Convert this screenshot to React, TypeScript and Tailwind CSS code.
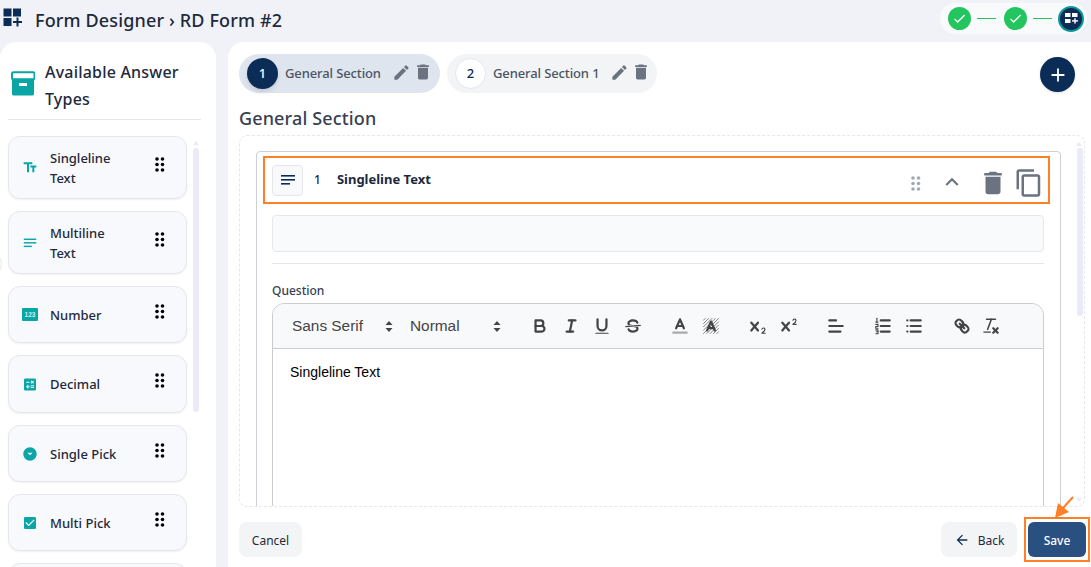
import React from 'react';
import {
  MdArrowDropDownCircle,
  MdCalculate,
  MdCheckBox,
  MdCheck,
  MdDelete,
  MdEdit,
  MdKeyboardArrowUp,
  MdOutlineContentCopy,
  MdTextFields,
  MdAdd,
  MdArrowBack,
} from 'react-icons/md';

const Dots = ({ color = '#000', className = '' }: any) => (
  <svg width="10" height="15" viewBox="0 0 10 15" className={className} fill={color}>
    {[2, 7.5, 13].map((cy) =>
      [2, 7.5].map((cx) => <circle key={`${cx}-${cy}`} cx={cx} cy={cy} r="1.8" />)
    )}
  </svg>
);

const ShortText = ({ size = 18, color = '#0aa5a5', className = '' }: any) => (
  <svg width={size} height={size} viewBox="0 0 18 18" className={className} fill={color}>
    <rect x="2" y="4" width="14" height="1.6" />
    <rect x="2" y="8" width="14" height="1.6" />
    <rect x="2" y="12" width="9" height="1.6" />
  </svg>
);

const NumberIcon = () => (
  <svg width="16" height="13" viewBox="0 0 16 13">
    <rect width="16" height="13" fill="#0aa5a5" rx="1" />
    <text x="8" y="9" textAnchor="middle" fill="#cfeeee" fontSize="6.5" fontWeight="700" fontFamily="Liberation Sans">123</text>
  </svg>
);

const ArchiveIcon = ({ className = '' }: any) => (
  <svg width="24" height="25" viewBox="0 0 24 25" className={className}>
    <rect x="1" y="7" width="22" height="17.5" rx="1.5" fill="#0aa5a5" />
    <rect x="1" y="1.2" width="22.5" height="7" rx="1.5" fill="#fff" stroke="#0aa5a5" strokeWidth="2" />
    <rect x="8" y="12" width="8" height="3" fill="#fff" />
  </svg>
);

const answerTypes = [
  { label: <>Singleline<br />Text</>, icon: <MdTextFields size={19} color="#0aa5a5" />, h: 'h-[63px]' },
  { label: <>Multiline<br />Text</>, icon: <ShortText size={16} />, h: 'h-[63px]' },
  { label: 'Number', icon: <NumberIcon />, h: 'h-[57px]' },
  { label: 'Decimal', icon: <MdCalculate size={17} color="#0aa5a5" />, h: 'h-[58px]' },
  { label: 'Single Pick', icon: <MdArrowDropDownCircle size={18} color="#0aa5a5" />, h: 'h-[57px]' },
  { label: 'Multi Pick', icon: <MdCheckBox size={18} color="#0aa5a5" />, h: 'h-[57px]' },
  { label: '', icon: null, h: 'h-[57px]' },
];

const AnswerCard = ({ label, icon, h }: any) => (
  <div className={`${h} shrink-0 rounded-xl border border-[#e5e7eb] bg-[#f8f9fc] shadow-[0_1px_2px_rgba(0,0,0,0.06)] flex items-center pl-[13px] pr-[21px]`}>
    <div className="w-[16px] flex justify-center shrink-0">{icon}</div>
    <div className="ml-[12px] flex-1 text-[13px] leading-[20px] font-medium text-[#1e293b]">{label}</div>
    {label ? <Dots className="-mt-[7px]" /> : null}
  </div>
);

const SectionTab = ({ num, title, active, className }: any) => (
  <div className={`${className} h-[39px] rounded-[20px] flex items-center pl-2 ${active ? 'bg-[#dfe5ef]' : 'bg-[#f3f4f6]'}`}>
    <div
      className={
        active
          ? 'w-[31px] h-[31px] rounded-full bg-[#0b2c56] text-white flex items-center justify-center text-[13px] font-medium shadow-md'
          : 'w-[31px] h-[31px] rounded-full bg-white border border-[#e2e8f0] text-[#0b2c56] flex items-center justify-center text-[13px] font-medium'
      }
    >
      {num}
    </div>
    <span className="ml-[7px] mt-[1px] text-[13px] tracking-[-0.12px] font-medium text-[#4b5563]">{title}</span>
    <MdEdit size={19} color="#6b7280" className="ml-[11px] -mt-[3px]" />
    <MdDelete size={20} color="#6b7280" className="ml-[2px] -mt-[3px]" />
  </div>
);

const QlBtn = ({ children, className = '' }: any) => (
  <span className={`${className} w-[31px] h-[20px] flex justify-center shrink-0`}>
    <svg width="20" height="20" viewBox="0 0 18 18" fill="none" stroke="#444" strokeWidth="2" strokeLinecap="round" strokeLinejoin="round">
      {children}
    </svg>
  </span>
);

const SelectCaret = () => (
  <svg width="8" height="13" viewBox="0 0 8 13" fill="#444">
    <path d="M4 1 L7.5 5 H0.5 Z" />
    <path d="M4 12 L7.5 8 H0.5 Z" />
  </svg>
);

const xPath =
  'M9.65,5.241a1,1,0,0,0-1.409.108L6,7.964,3.759,5.349A1,1,0,0,0,2.192,6.59178Q2.21,6.615,2.241,6.651L4.684,9.5,2.241,12.35A1,1,0,0,0,3.71,13.70722q0.02-.02125.038-0.043L6,11.036,8.241,13.65a1,1,0,1,0,1.567-1.24277Q9.79,12.385,9.759,12.35L7.316,9.5,9.759,6.651A1,1,0,0,0,9.65,5.241Z';

const Toolbar = () => (
  <div className="h-[45px] shrink-0 bg-[#f8f9fb] border-b border-[#ccc] rounded-t-xl flex items-center pl-[19px] text-[15.4px] text-[#444] font-['Liberation_Sans',sans-serif]">
    <span className="w-[93px]">Sans Serif</span>
    <SelectCaret />
    <span className="ml-[17px] w-[83px]">Normal</span>
    <SelectCaret />
    <QlBtn className="ml-[23px]">
      <path d="M5,4H9.5A2.5,2.5,0,0,1,12,6.5v0A2.5,2.5,0,0,1,9.5,9H5V4Z" />
      <path d="M5,9h5.5A2.5,2.5,0,0,1,13,11.5v0A2.5,2.5,0,0,1,10.5,14H5V9Z" />
    </QlBtn>
    <QlBtn>
      <line x1="7" x2="13" y1="4" y2="4" />
      <line x1="5" x2="11" y1="14" y2="14" />
      <line x1="8" x2="10" y1="14" y2="4" />
    </QlBtn>
    <QlBtn>
      <path d="M5,3V9a4,4,0,0,0,4,4H9a4,4,0,0,0,4-4V3" />
      <rect height="1" rx=".5" width="12" x="3" y="15" fill="#444" strokeWidth="0" />
    </QlBtn>
    <QlBtn>
      <line x1="15.5" x2="2.5" y1="8.5" y2="9.5" strokeWidth="1.2" />
      <path fill="#444" stroke="none" d="M9.007,8C6.542,7.791,6,7.519,6,6.5,6,5.792,7.283,5,9,5c1.571,0,2.765.679,2.969,1.309a1,1,0,0,0,1.9-.617C13.356,4.106,11.354,3,9,3,6.2,3,4,4.538,4,6.5a3.2,3.2,0,0,0,.5,1.843Z" />
      <path fill="#444" stroke="none" d="M8.984,10C11.457,10.208,12,10.479,12,11.5c0,.708-1.283,1.5-3,1.5-1.571,0-2.765-.679-2.969-1.309a1,1,0,1,0-1.9.617C4.644,13.894,6.646,15,9,15c2.8,0,5-1.538,5-3.5a3.2,3.2,0,0,0-.5-1.843Z" />
    </QlBtn>
    <QlBtn className="ml-[16px]">
      <line x1="3" x2="15" y1="15" y2="15" stroke="#aaa" />
      <polyline points="5.5 11 9 3 12.5 11" />
      <line x1="11.63" x2="6.38" y1="9" y2="9" />
    </QlBtn>
    <QlBtn>
      <g stroke="#777" strokeWidth="0.8" strokeLinecap="butt">
        <line x1="2" y1="4" x2="4" y2="2" />
        <line x1="2" y1="7" x2="7" y2="2" />
        <line x1="2" y1="10" x2="10" y2="2" />
        <line x1="2" y1="13" x2="13" y2="2" />
        <line x1="2" y1="16" x2="16" y2="2" />
        <line x1="5" y1="16" x2="16" y2="5" />
        <line x1="8" y1="16" x2="16" y2="8" />
        <line x1="11" y1="16" x2="16" y2="11" />
        <line x1="14" y1="16" x2="16" y2="14" />
      </g>
      <polyline points="5.5 13 9 5 12.5 13" />
      <line x1="11.63" x2="6.38" y1="11" y2="11" />
    </QlBtn>
    <QlBtn className="ml-[16px]">
      <path fill="#444" stroke="none" d="M15.5,15H13.861a3.858,3.858,0,0,0,1.914-2.975,1.8,1.8,0,0,0-1.6-1.751A1.921,1.921,0,0,0,12.021,11.7a.5,.5,0,1,0,.957.291h0a.914,.914,0,0,1,1.053-.725,.81,.81,0,0,1,.744.762c0,1.076-1.17,1.87-1.94,2.431A1.456,1.456,0,0,0,12,15.5a.5,.5,0,0,0,.5.5h3A.5,.5,0,0,0,15.5,15Z" />
      <path fill="#444" stroke="none" d={xPath} />
    </QlBtn>
    <QlBtn>
      <path fill="#444" stroke="none" d="M15.5,7H13.861a4.015,4.015,0,0,0,1.914-2.975,1.8,1.8,0,0,0-1.6-1.751A1.922,1.922,0,0,0,12.021,3.7a.5,.5,0,1,0,.957.291,.917,.917,0,0,1,1.053-.725,.81,.81,0,0,1,.744.762c0,1.077-1.164,1.925-1.934,2.486A1.423,1.423,0,0,0,12,7.5a.5,.5,0,0,0,.5.5h3A.5,.5,0,0,0,15.5,7Z" />
      <path fill="#444" stroke="none" d={xPath} />
    </QlBtn>
    <QlBtn className="ml-[16px]">
      <line x1="3" x2="15" y1="9" y2="9" />
      <line x1="3" x2="13" y1="14" y2="14" />
      <line x1="3" x2="9" y1="4" y2="4" />
    </QlBtn>
    <QlBtn className="ml-[16px]">
      <line x1="7" x2="15" y1="4" y2="4" />
      <line x1="7" x2="15" y1="9" y2="9" />
      <line x1="7" x2="15" y1="14" y2="14" />
      <line x1="2.5" x2="4.5" y1="5.5" y2="5.5" strokeWidth="1" />
      <line x1="3.5" x2="3.5" y1="2" y2="5" strokeWidth="1" />
      <path d="M2.5 7.5 H4.5 V9.5 H2.5 V11 H4.5" strokeWidth="1" />
      <path d="M2.5 12.5 H4.5 V16 H2.5 M3 14.2 H4.5" strokeWidth="1" />
    </QlBtn>
    <QlBtn>
      <line x1="6" x2="15" y1="4" y2="4" />
      <line x1="6" x2="15" y1="9" y2="9" />
      <line x1="6" x2="15" y1="14" y2="14" />
      <line x1="3" x2="3" y1="4" y2="4" />
      <line x1="3" x2="3" y1="9" y2="9" />
      <line x1="3" x2="3" y1="14" y2="14" />
    </QlBtn>
    <QlBtn className="ml-[17px]">
      <line x1="7" x2="11" y1="7" y2="11" />
      <path d="M8.9,4.577a3.476,3.476,0,0,1,.36,4.679A3.476,3.476,0,0,1,4.577,8.9C3.185,7.5,2.035,6.4,4.217,4.217S7.5,3.185,8.9,4.577Z" />
      <path d="M13.423,9.1a3.476,3.476,0,0,0-4.679-.36,3.476,3.476,0,0,0,.36,4.679c1.392,1.392,2.5,2.542,4.679.36S14.815,10.5,13.423,9.1Z" />
    </QlBtn>
    <QlBtn className="-ml-[2px]">
      <line x1="5" x2="13" y1="3" y2="3" strokeWidth="1.4" />
      <line x1="6" x2="9.35" y1="12" y2="3" strokeWidth="1.4" />
      <line x1="11" x2="15" y1="11" y2="15" />
      <line x1="15" x2="11" y1="11" y2="15" />
      <rect fill="#444" stroke="none" height="1" rx=".5" width="7" x="2" y="14" />
    </QlBtn>
  </div>
);

const Stepper = () => (
  <div className="h-[31px] w-[147px] rounded-full bg-[#f8fafc] flex items-center pl-[8px]">
    <div className="w-[23px] h-[23px] rounded-full bg-[#22c55e] flex items-center justify-center">
      <MdCheck size={15} color="#fff" />
    </div>
    <div className="w-[19px] h-[1px] bg-[#22c55e] ml-[6px] mr-[8px]" />
    <div className="w-[23px] h-[23px] rounded-full bg-[#22c55e] flex items-center justify-center">
      <MdCheck size={15} color="#fff" />
    </div>
    <div className="w-[19px] h-[1px] bg-[#22c55e] mx-[6px]" />
    <div className="w-[26px] h-[26px] rounded-full bg-[#0b2c56] border-2 border-[#0a9a9a] flex items-center justify-center">
      <svg width="13" height="11" viewBox="0 0 13 11" fill="#fff">
        <rect x="0" y="0" width="5.5" height="4" />
        <rect x="7" y="0" width="5.5" height="4" />
        <rect x="0" y="6" width="5.5" height="4" />
        <rect x="7" y="7.2" width="6" height="1.4" />
        <rect x="9.3" y="5.2" width="1.4" height="5.4" />
      </svg>
    </div>
  </div>
);

export default function App() {
  return (
    <div className="w-full h-[567px] overflow-hidden bg-[#f0f2f8] font-['Noto_Sans',sans-serif] flex flex-col relative">
      {/* top bar */}
      <header className="h-[42px] shrink-0 flex items-start">
        <svg width="20" height="20" viewBox="0 0 20 20" fill="#0b2c56" className="ml-[3px] mt-[8px]">
          <rect x="0.5" y="0.5" width="8" height="8" />
          <rect x="10" y="0.5" width="8" height="8" />
          <rect x="0.5" y="10" width="8" height="8" />
          <rect x="10" y="13" width="9" height="2" />
          <rect x="13.5" y="9.5" width="2" height="9" />
        </svg>
        <h1 className="ml-[12px] mt-[6px] text-[18px] tracking-[0.14px] leading-[28px] font-medium text-[#1e293b]">Form Designer › RD Form #2</h1>
        <div className="ml-auto mr-[4px] mt-[3px]">
          <Stepper />
        </div>
      </header>

      <div className="flex-1 flex gap-[12px] min-h-0">
        {/* left panel */}
        <aside className="w-[216px] shrink-0 bg-white rounded-t-2xl relative overflow-hidden pl-[8px] pr-[15px] flex flex-col">
          <div className="h-[78px] shrink-0 border-b border-[#e5e7eb] flex items-start">
            <ArchiveIcon className="ml-[3px] mt-[29px]" />
            <div className="ml-[10px] mt-[17px] text-[16px] tracking-[0.2px] leading-[27px] font-medium text-[#1e293b]">
              Available Answer
              <br />
              Types
            </div>
          </div>
          <div className="flex gap-[6px] flex-1 min-h-0 pt-[16px]">
            <div className="w-[179px] shrink-0 flex flex-col gap-[12px]">
              {answerTypes.map((t, i) => (
                <AnswerCard key={i} {...t} />
              ))}
            </div>
            <div className="w-[6px] shrink-0">
              <div className="mt-[5px] mx-auto w-0 h-0 border-x-[3px] border-x-transparent border-b-[4px] border-b-[#ebeaf8]" />
              <div className="mt-[3px] h-[264px] w-[6px] rounded-full bg-[#ebeaf8]" />
            </div>
          </div>
          <div className="absolute -left-[22px] top-[210px] w-[24px] h-[24px] rounded-full bg-white border border-[#e5e7eb]" />
        </aside>

        {/* main panel */}
        <main className="flex-1 min-w-0 bg-white rounded-tl-2xl pl-[11px] pr-[1px] pt-[12px] flex flex-col">
          <div className="h-[39px] shrink-0 flex items-start pr-[15px]">
            <SectionTab num="1" title="General Section" active className="w-[201px]" />
            <SectionTab num="2" title="General Section 1" className="w-[210px] ml-[7px]" />
            <button className="ml-auto mt-[3px] w-[35px] h-[35px] rounded-full bg-[#0b2c56] flex items-center justify-center shadow-sm">
              <MdAdd size={22} color="#fff" />
            </button>
          </div>
          <h2 className="mt-[11px] h-[28px] shrink-0 text-[18px] tracking-[0.14px] leading-[28px] font-medium text-[#374151]">General Section</h2>
          <div className="mt-[3px] w-[846px] h-[372px] shrink-0 border border-dashed border-[#e5e7eb] rounded-lg relative overflow-hidden pl-[16px] pt-[15px]">
            <div className="w-[805px] h-[400px] border border-[#ccd0d5] rounded-t-[4px] pl-[6px] pr-[10px] pt-[4px]">
              <div className="h-[48px] border-2 border-[#ff7f27] flex items-center pl-[7px] pr-[4px]">
                <div className="w-[31px] h-[31px] rounded bg-[#f8f9fb] border border-[#e5e7eb] flex items-center justify-center">
                  <ShortText size={18} color="#0b2c56" />
                </div>
                <span className="ml-[11px] text-[12px] font-medium text-[#1e293b]">1</span>
                <span className="ml-[16px] text-[13px] font-bold text-[#1e293b]">Singleline Text</span>
                <Dots color="#a3a9b5" className="ml-auto mt-[6px]" />
                <MdKeyboardArrowUp size={26} color="#6b7280" className="ml-[18px] mt-[4px]" />
                <MdDelete size={30} color="#6b7280" className="ml-[13px] mt-[5px]" />
                <MdOutlineContentCopy size={30} color="#6b7280" className="ml-[6px] mt-[5px]" />
              </div>
              <div className="ml-[9px] mr-[6px]">
                <div className="mt-[11px] h-[37px] rounded border border-[#e5e7eb] bg-[#f9fafb]" />
                <div className="mt-[11px] h-px bg-[#e5e7eb]" />
                <div className="mt-[18px] text-[12px] leading-[18px] font-medium text-[#374151]">Question</div>
                <div className="mt-[3px] border border-[#ccc] rounded-t-xl h-[300px]">
                  <Toolbar />
                  <div className="pl-[17px] pt-[13px] text-[14px] leading-[20px] text-black font-['Liberation_Sans',sans-serif]">Singleline Text</div>
                </div>
              </div>
            </div>
            <div className="absolute right-[2px] top-[6px] w-0 h-0 border-x-[3px] border-x-transparent border-b-[4px] border-b-[#ebeaf8]" />
            <div className="absolute right-[1px] top-[12px] w-[6px] h-[168px] rounded-full bg-[#ebeaf8]" />
            <div className="absolute right-[2px] bottom-[4px] w-0 h-0 border-x-[3px] border-x-transparent border-t-[4px] border-t-[#ebeaf8]" />
          </div>

          <div className="mt-[10px] flex items-start">
            <button className="mt-[5px] w-[63px] h-[35px] pt-[2px] rounded-lg bg-[#f3f4f6] text-[12px] text-[#1e293b]">Cancel</button>
            <button className="ml-auto mt-[5px] w-[76px] h-[35px] pt-[2px] rounded-lg bg-[#f3f4f6] text-[12px] text-[#1e293b] flex items-center justify-center gap-[8px]">
              <MdArrowBack size={16} color="#0b2c56" className="-mt-[2px]" />
              Back
            </button>
            <div className="ml-[7px] border-2 border-[#ff7f27] px-[2px] py-[3px] relative">
              <button className="block w-[58px] h-[35px] pt-[2px] rounded-md bg-[#2a5082] text-[12px] font-medium text-white">Save</button>
              <svg width="24" height="26" viewBox="0 0 24 26" className="absolute left-[26px] -top-[24px]">
                <line x1="21" y1="2" x2="11" y2="13" stroke="#ff7f27" strokeWidth="2" />
                <path d="M3 23 L6 8 L17 17 Z" fill="#ff7f27" />
              </svg>
            </div>
          </div>
        </main>
      </div>
    </div>
  );
}
